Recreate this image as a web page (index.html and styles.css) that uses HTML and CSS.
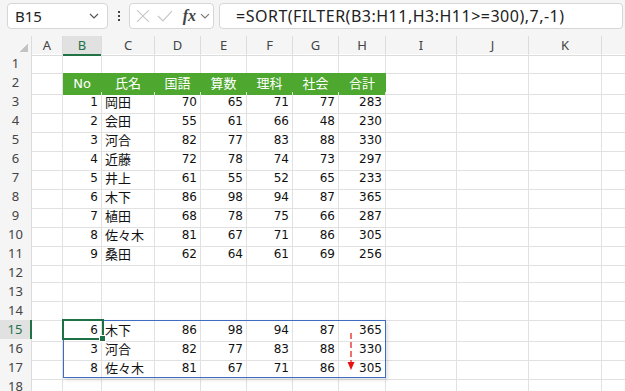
FILE: index.html
```html
<!DOCTYPE html>
<html lang="ja">
<head>
    <meta charset="UTF-8">
    <title>SORT FILTER</title>
    <link rel="stylesheet" href="styles.css">
</head>
<body>
    <!-- 数式バー -->
    <div class="bar">
        <div class="namebox">
            <span>B15</span>
            <svg class="chev" width="10" height="6" viewBox="0 0 10 6"><path d="M1 1l4 4 4-4" fill="none" stroke="#555" stroke-width="1.2"/></svg>
        </div>
        <div class="dots"><i></i><i></i><i></i></div>
        <div class="fxbox">
            <svg width="14" height="14" viewBox="0 0 14 14"><path d="M1 1l12 12M13 1L1 13" stroke="#c6c6c6" stroke-width="1.1" fill="none"/></svg>
            <svg width="16" height="12" viewBox="0 0 16 12"><path d="M1 6l5 5L15 1" stroke="#c6c6c6" stroke-width="1.1" fill="none"/></svg>
            <span class="fx">fx</span>
            <svg class="chev" width="10" height="6" viewBox="0 0 10 6"><path d="M1 1l4 4 4-4" fill="none" stroke="#777" stroke-width="1.1"/></svg>
        </div>
        <div class="formula">=SORT(FILTER(B3:H11,H3:H11&gt;=300),7,-1)</div>
    </div>

    <!-- シート -->
    <div class="sheet">
        <div class="row head"><div class="corner"></div><div>A</div><div class="on">B</div><div>C</div><div>D</div><div>E</div><div>F</div><div>G</div><div>H</div><div>I</div><div>J</div><div>K</div><div></div></div>
        <div class="row"><div class="rh">1</div><div></div><div></div><div></div><div></div><div></div><div></div><div></div><div></div><div></div><div></div><div></div><div></div></div>
        <div class="row"><div class="rh">2</div><div></div><div class="g">No</div><div class="g">氏名</div><div class="g">国語</div><div class="g">算数</div><div class="g">理科</div><div class="g">社会</div><div class="g">合計</div><div></div><div></div><div></div><div></div></div>
        <div class="row"><div class="rh">3</div><div></div><div class="n">1</div><div class="t">岡田</div><div class="n">70</div><div class="n">65</div><div class="n">71</div><div class="n">77</div><div class="n">283</div><div></div><div></div><div></div><div></div></div>
        <div class="row"><div class="rh">4</div><div></div><div class="n">2</div><div class="t">会田</div><div class="n">55</div><div class="n">61</div><div class="n">66</div><div class="n">48</div><div class="n">230</div><div></div><div></div><div></div><div></div></div>
        <div class="row"><div class="rh">5</div><div></div><div class="n">3</div><div class="t">河合</div><div class="n">82</div><div class="n">77</div><div class="n">83</div><div class="n">88</div><div class="n">330</div><div></div><div></div><div></div><div></div></div>
        <div class="row"><div class="rh">6</div><div></div><div class="n">4</div><div class="t">近藤</div><div class="n">72</div><div class="n">78</div><div class="n">74</div><div class="n">73</div><div class="n">297</div><div></div><div></div><div></div><div></div></div>
        <div class="row"><div class="rh">7</div><div></div><div class="n">5</div><div class="t">井上</div><div class="n">61</div><div class="n">55</div><div class="n">52</div><div class="n">65</div><div class="n">233</div><div></div><div></div><div></div><div></div></div>
        <div class="row"><div class="rh">8</div><div></div><div class="n">6</div><div class="t">木下</div><div class="n">86</div><div class="n">98</div><div class="n">94</div><div class="n">87</div><div class="n">365</div><div></div><div></div><div></div><div></div></div>
        <div class="row"><div class="rh">9</div><div></div><div class="n">7</div><div class="t">植田</div><div class="n">68</div><div class="n">78</div><div class="n">75</div><div class="n">66</div><div class="n">287</div><div></div><div></div><div></div><div></div></div>
        <div class="row"><div class="rh">10</div><div></div><div class="n">8</div><div class="t">佐々木</div><div class="n">81</div><div class="n">67</div><div class="n">71</div><div class="n">86</div><div class="n">305</div><div></div><div></div><div></div><div></div></div>
        <div class="row"><div class="rh">11</div><div></div><div class="n">9</div><div class="t">桑田</div><div class="n">62</div><div class="n">64</div><div class="n">61</div><div class="n">69</div><div class="n">256</div><div></div><div></div><div></div><div></div></div>
        <div class="row"><div class="rh">12</div><div></div><div></div><div></div><div></div><div></div><div></div><div></div><div></div><div></div><div></div><div></div><div></div></div>
        <div class="row"><div class="rh">13</div><div></div><div></div><div></div><div></div><div></div><div></div><div></div><div></div><div></div><div></div><div></div><div></div></div>
        <div class="row"><div class="rh">14</div><div></div><div></div><div></div><div></div><div></div><div></div><div></div><div></div><div></div><div></div><div></div><div></div></div>
        <div class="row"><div class="rh on">15</div><div></div><div class="n">6</div><div class="t">木下</div><div class="n">86</div><div class="n">98</div><div class="n">94</div><div class="n">87</div><div class="n">365</div><div></div><div></div><div></div><div></div></div>
        <div class="row"><div class="rh">16</div><div></div><div class="n">3</div><div class="t">河合</div><div class="n">82</div><div class="n">77</div><div class="n">83</div><div class="n">88</div><div class="n">330</div><div></div><div></div><div></div><div></div></div>
        <div class="row"><div class="rh">17</div><div></div><div class="n">8</div><div class="t">佐々木</div><div class="n">81</div><div class="n">67</div><div class="n">71</div><div class="n">86</div><div class="n">305</div><div></div><div></div><div></div><div></div></div>
        <div class="row"><div class="rh">18</div><div></div><div></div><div></div><div></div><div></div><div></div><div></div><div></div><div></div><div></div><div></div><div></div></div>

        <!-- スピル範囲と選択セル -->
        <div class="spill"></div>
        <div class="sel"><span class="handle"></span></div>
        <svg class="arrow" width="8" height="38" viewBox="0 0 8 38">
            <path d="M4 0v29" stroke="#e81010" stroke-width="1.2" stroke-dasharray="6 3" fill="none"/>
            <path d="M0.5 29h7L4 37z" fill="#e81010"/>
        </svg>
    </div>
</body>
</html>
```

FILE: styles.css
```css
body {
    margin: 0;
    width: 625px;
    height: 391px;
    overflow: hidden;
    background: #f5f5f5;
    font-family: "DejaVu Sans", "Noto Sans CJK JP", sans-serif;
    color: #111;
}

/* 数式バー */
.bar {
    display: flex;
    align-items: flex-start;
    box-sizing: border-box;
    height: 36px;
    padding: 3px 0 0 7px;
}

.namebox,
.fxbox,
.formula {
    box-sizing: border-box;
    height: 26px;
    background: #fff;
    border: 1px solid #d6d6d6;
    border-radius: 4px;
    display: flex;
    align-items: center;
}

.namebox {
    width: 101px;
    padding: 0 8px 0 7px;
    justify-content: space-between;
    font-family: "Noto Sans", sans-serif;
    font-size: 15px;
    color: #222;
}

.dots {
    width: 21px;
    height: 26px;
    display: flex;
    flex-direction: column;
    align-items: center;
    justify-content: center;
    gap: 2px;
}

.dots i {
    width: 2px;
    height: 2px;
    background: #444;
}

.fxbox {
    width: 85px;
    padding: 0 3px 0 6px;
    gap: 7px;
}

.fxbox .fx {
    font-family: "Liberation Serif", serif;
    font-style: italic;
    font-weight: 700;
    font-size: 16px;
    color: #444;
    margin-left: 3px;
    margin-right: -3px;
}

.formula {
    width: 404px;
    margin-left: 5px;
    padding-left: 16px;
    font-family: "Noto Sans", sans-serif;
    font-size: 16px;
    letter-spacing: 0.5px;
    color: #222;
}

/* シート */
.sheet {
    position: relative;
    background: #fff;
}

.row {
    display: grid;
    grid-template-columns: 32px 31px 39px 53px 46px 46px 46px 46px 47px 71px 72px 73px 60px;
    height: 19px;
}

.row > div {
    box-sizing: border-box;
    border-right: 1px solid #e1e1e1;
    border-bottom: 1px solid #e1e1e1;
    font-size: 12px;
    line-height: 21px;
    white-space: nowrap;
}

.row.head {
    height: 18px;
    background: #f5f5f5;
}

.row.head > div {
    border-color: #dcdcdc;
    text-align: center;
    font-family: "Noto Sans", sans-serif;
    font-size: 13px;
    line-height: 18px;
    color: #444;
}

.row.head > div.on {
    background: #e1e1e1;
    border-bottom: 2px solid #217346;
    color: #217346;
}

.row.head > .corner {
    background: linear-gradient(135deg, transparent 62%, #c3c3c3 62%) no-repeat right 3px bottom 3px / 11px 11px;
}

.row > .rh {
    background: #f5f5f5;
    border-color: #dcdcdc;
    text-align: center;
    font-family: "Noto Sans", sans-serif;
    font-size: 13px;
    line-height: 19px;
    color: #444;
}

.row > .rh.on {
    background: #e1e1e1;
    border-right: 2px solid #217346;
    color: #217346;
}

.row > .n {
    text-align: right;
    padding-right: 3px;
}

.row > .t {
    padding-left: 3px;
    font-size: 13px;
}

.row > .g {
    background: #4ea72e;
    border-color: #4ea72e;
    color: #fff;
    text-align: center;
    font-size: 13px;
}

.spill {
    position: absolute;
    left: 63px;
    top: 284px;
    width: 323px;
    height: 58px;
    box-sizing: border-box;
    border: 1px solid #3f6cc0;
    box-shadow: 2px 2px 4px rgba(0, 0, 0, 0.12);
}

.sel {
    position: absolute;
    left: 62px;
    top: 283px;
    width: 42px;
    height: 21px;
    box-sizing: border-box;
    border: 2px solid #1e7145;
}

.sel .handle {
    position: absolute;
    right: -4px;
    bottom: -4px;
    width: 5px;
    height: 5px;
    background: #1e7145;
    border: 1px solid #fff;
}

.arrow {
    position: absolute;
    left: 347px;
    top: 297px;
}
```
